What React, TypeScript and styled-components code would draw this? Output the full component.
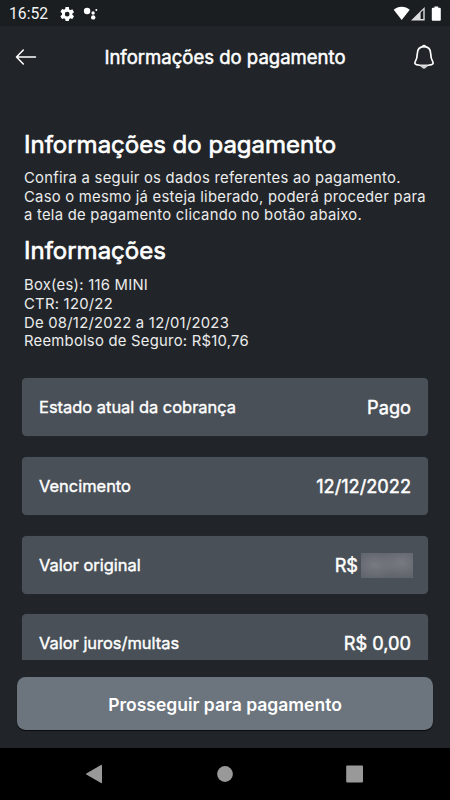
import React from 'react';
import styled, { createGlobalStyle } from 'styled-components';

const GlobalStyle = createGlobalStyle`
  *, *::before, *::after { box-sizing: border-box; }
  body { margin: 0; background: #212529; }
  h1, h2, p, dl, dt, dd { margin: 0; }
`;

const Screen = styled.div`
  display: flex;
  flex-direction: column;
  width: 450px;
  height: 800px;
  overflow: hidden;
  background: #212529;
  color: #fff;
  font-family: Inter, sans-serif;
`;

const StatusBar = styled.div`
  display: flex;
  align-items: center;
  flex: 0 0 26px;
  padding: 2px 8px 0 9px;
  background: #1a1e20;
  font: 400 15.7px/24px Roboto, sans-serif;
`;

const Clock = styled.span`
  width: 51px;
  color: #f4f4f4;
`;

const StatusIcons = styled.div`
  display: flex;
  align-items: center;
  gap: 9px;
  flex: 1;
`;

const SignalIcons = styled.div`
  display: flex;
  align-items: center;
`;

const AppBar = styled.header`
  display: grid;
  grid-template-columns: 28px 1fr 28px;
  align-items: center;
  flex: 0 0 62px;
  padding: 0 12px;
`;

const IconButton = styled.button`
  display: flex;
  align-items: center;
  justify-content: center;
  width: 28px;
  height: 40px;
  padding: 0;
  border: 0;
  background: none;
  color: #fff;
`;

const BarTitle = styled.h1`
  padding-bottom: 1px;
  font-size: 18.55px;
  font-weight: 400;
  line-height: 24px;
  text-align: center;
  -webkit-text-stroke: 0.5px #fff;
`;

const Content = styled.main`
  flex: 0 0 572px;
  overflow: hidden;
  padding: 42px 22px 0;
`;

const Heading = styled.h2<{ $before?: number; $after: number }>`
  margin: ${({ $before = 0, $after }) => `${$before}px 0 ${$after}px`};
  padding-left: 2px;
  font-size: 24px;
  font-weight: 400;
  line-height: 30px;
  -webkit-text-stroke: 0.65px #fff;
`;

const Copy = styled.p`
  padding-left: 2px;
  color: #ececec;
  font-size: 14.8px;
  letter-spacing: 0.26px;
  line-height: 18.7px;
  white-space: pre;
`;

const ChargeList = styled.dl`
  display: flex;
  flex-direction: column;
  gap: 20.8px;
  padding-top: 27.1px;
`;

const ChargeCard = styled.div`
  display: flex;
  align-items: center;
  justify-content: space-between;
  flex: 0 0 58px;
  padding: 0 17px;
  border-radius: 4.5px;
  background: #495057;
  box-shadow: 0 0 1px rgba(73, 80, 87, 0.7);
`;

const ChargeLabel = styled.dt`
  font-size: 16.45px;
  line-height: 24px;
  -webkit-text-stroke: 0.4px #fff;
`;

const ChargeValue = styled.dd`
  display: flex;
  align-items: center;
  font-size: 18.2px;
  line-height: 24px;
  -webkit-text-stroke: 0.45px #fff;
`;

const Redacted = styled.span`
  width: 52px;
  height: 25px;
  margin: 2px -2px 0 3px;
  background:
    radial-gradient(ellipse 22px 15px at 27% 48%, rgba(124, 127, 133, 0.85), transparent),
    radial-gradient(ellipse 22px 15px at 77% 40%, rgba(124, 127, 133, 0.85), transparent),
    #60656b;
`;

const Footer = styled.footer`
  flex: 0 0 88px;
  padding: 17.4px 17px 0;
`;

const PayButton = styled.button`
  display: block;
  width: 416px;
  height: 52.6px;
  padding: 2px 0 0;
  border: 0;
  border-radius: 8.5px;
  background: #6c757d;
  box-shadow: 0 1px 1px rgba(0, 0, 0, 0.75);
  color: #fff;
  font: 600 17.5px/24px Inter, sans-serif;
`;

const SystemNav = styled.nav`
  display: grid;
  grid-template-columns: repeat(3, 130px);
  justify-content: center;
  align-items: center;
  justify-items: center;
  flex: 1;
  background: #000;
`;

const charges = [
  { label: 'Estado atual da cobrança', value: 'Pago' },
  { label: 'Vencimento', value: '12/12/2022' },
  { label: 'Valor original', value: 'R$', redacted: true },
  { label: 'Valor juros/multas', value: 'R$ 0,00' },
];

const GearIcon = () => (
  <svg width="14.4" height="14.4" viewBox="2 2 20 20" fill="#fff">
    <path d="M19.14 12.94c.04-.3.06-.61.06-.94s-.02-.64-.07-.94l2.03-1.58a.49.49 0 0 0 .12-.61l-1.92-3.32a.49.49 0 0 0-.59-.22l-2.39.96a7 7 0 0 0-1.62-.94l-.36-2.54A.48.48 0 0 0 13.92 2h-3.84c-.24 0-.43.17-.47.41l-.36 2.54c-.59.24-1.13.57-1.62.94l-2.39-.96a.48.48 0 0 0-.59.22L2.74 8.47a.47.47 0 0 0 .12.61l2.03 1.58A6 6 0 0 0 4.8 12c0 .31.02.64.07.94l-2.03 1.58a.49.49 0 0 0-.12.61l1.92 3.32c.12.22.37.29.59.22l2.39-.96c.5.38 1.03.7 1.62.94l.36 2.54c.05.24.24.41.48.41h3.84c.24 0 .44-.17.47-.41l.36-2.54a7 7 0 0 0 1.62-.94l2.39.96c.22.08.47 0 .59-.22l1.92-3.32a.47.47 0 0 0-.12-.61zM12 15.3a3.3 3.3 0 1 1 0-6.6 3.3 3.3 0 0 1 0 6.6" />
  </svg>
);

const AssistantIcon = () => (
  <svg width="16" height="14" viewBox="0 0 16 14" fill="#fff">
    <circle cx="4.1" cy="4" r="3.2" />
    <circle cx="10.1" cy="6" r="1.7" />
    <circle cx="10.2" cy="10.4" r="2.2" />
    <circle cx="13.3" cy="3" r="1" />
  </svg>
);

export default function App() {
  return (
    <>
      <GlobalStyle />
      <Screen>
        <StatusBar>
          <Clock>16:52</Clock>
          <StatusIcons>
            <GearIcon />
            <AssistantIcon />
          </StatusIcons>
          <SignalIcons>
            <svg width="49" height="16" viewBox="0 0 49 16" fill="#fff">
              <path d="M.7 3.700C3 1.800 5.600.700 8.700.700s5.700 1.100 8 3L8.700 14Z" />
              <path d="M18 14.500 31.700.900V14.500Z" fillOpacity=".85" />
              <path d="M27.600 6.500 30.300 3.900V12.900H27.600Z" fill="#1a1e20" />
              <path d="M41.400 1.800V.600h3.800v1.200h1.600q1 0 1 1v10.900q0 1-1 1h-7q-1 0-1-1V2.800q0-1 1-1Z" />
            </svg>
          </SignalIcons>
        </StatusBar>

        <AppBar>
          <IconButton aria-label="Voltar">
            <svg width="22" height="18" viewBox="0 0 22 18" fill="none" stroke="currentColor" strokeWidth="1.500" strokeLinecap="round" strokeLinejoin="round">
              <path d="M20.500 9H1.500M8.300 2 1.500 9l6.800 7" />
            </svg>
          </IconButton>
          <BarTitle>Informações do pagamento</BarTitle>
          <IconButton aria-label="Notificações">
            <svg width="22" height="26" viewBox="0 0 22 26" fill="none" stroke="currentColor" strokeWidth="1.700" strokeLinecap="round" strokeLinejoin="round">
              <path d="M11 2.700C6.600 2.700 4.400 5.700 4.300 9.800C4.200 14.200 3.900 15.200 2.300 17.600C1.400 19 1.900 20.300 3.500 20.600Q5.500 20.900 7.500 21.500H14.500Q16.500 20.900 18.500 20.600C20.100 20.300 20.600 19 19.700 17.600C18.100 15.200 17.800 14.200 17.700 9.800C17.600 5.700 15.400 2.700 11 2.700Z" />
              <path d="M9.700 2.200Q11 1.200 12.300 2.200" />
              <path d="M7.500 21.500Q9 24.300 11 24.300T14.500 21.500Z" fill="#ccc" stroke="#ddd" strokeWidth=".8" />
            </svg>
          </IconButton>
        </AppBar>

        <Content>
          <Heading $after={9}>Informações do pagamento</Heading>
          <Copy>
            {'Confira a seguir os dados referentes ao pagamento.\nCaso o mesmo já esteja liberado, poderá proceder para\na tela de pagamento clicando no botão abaixo.'}
          </Copy>
          <Heading $before={11} $after={10}>Informações</Heading>
          <Copy>
            {'Box(es): 116 MINI\nCTR: 120/22\nDe 08/12/2022 a 12/01/2023\nReembolso de Seguro: R$10,76'}
          </Copy>
          <ChargeList>
            {charges.map(({ label, value, redacted }) => (
              <ChargeCard key={label}>
                <ChargeLabel>{label}</ChargeLabel>
                <ChargeValue>
                  {value}
                  {redacted && <Redacted />}
                </ChargeValue>
              </ChargeCard>
            ))}
          </ChargeList>
        </Content>

        <Footer>
          <PayButton>Prosseguir para pagamento</PayButton>
        </Footer>

        <SystemNav>
          <svg width="20" height="20" viewBox="0 0 20 20" fill="#999">
            <path d="M17 1.300V18.700Q17 19.500 16 19L1.300 10.500Q.7 10 1.300 9.500L16 1Q17 .5 17 1.300Z" />
          </svg>
          <svg width="20" height="20" viewBox="0 0 20 20" fill="#999">
            <circle cx="10" cy="10" r="7.900" />
          </svg>
          <svg width="20" height="20" viewBox="0 0 20 20" fill="#999">
            <rect x="1.200" y="1.600" width="16.800" height="16.800" rx=".8" />
          </svg>
        </SystemNav>
      </Screen>
    </>
  );
}
